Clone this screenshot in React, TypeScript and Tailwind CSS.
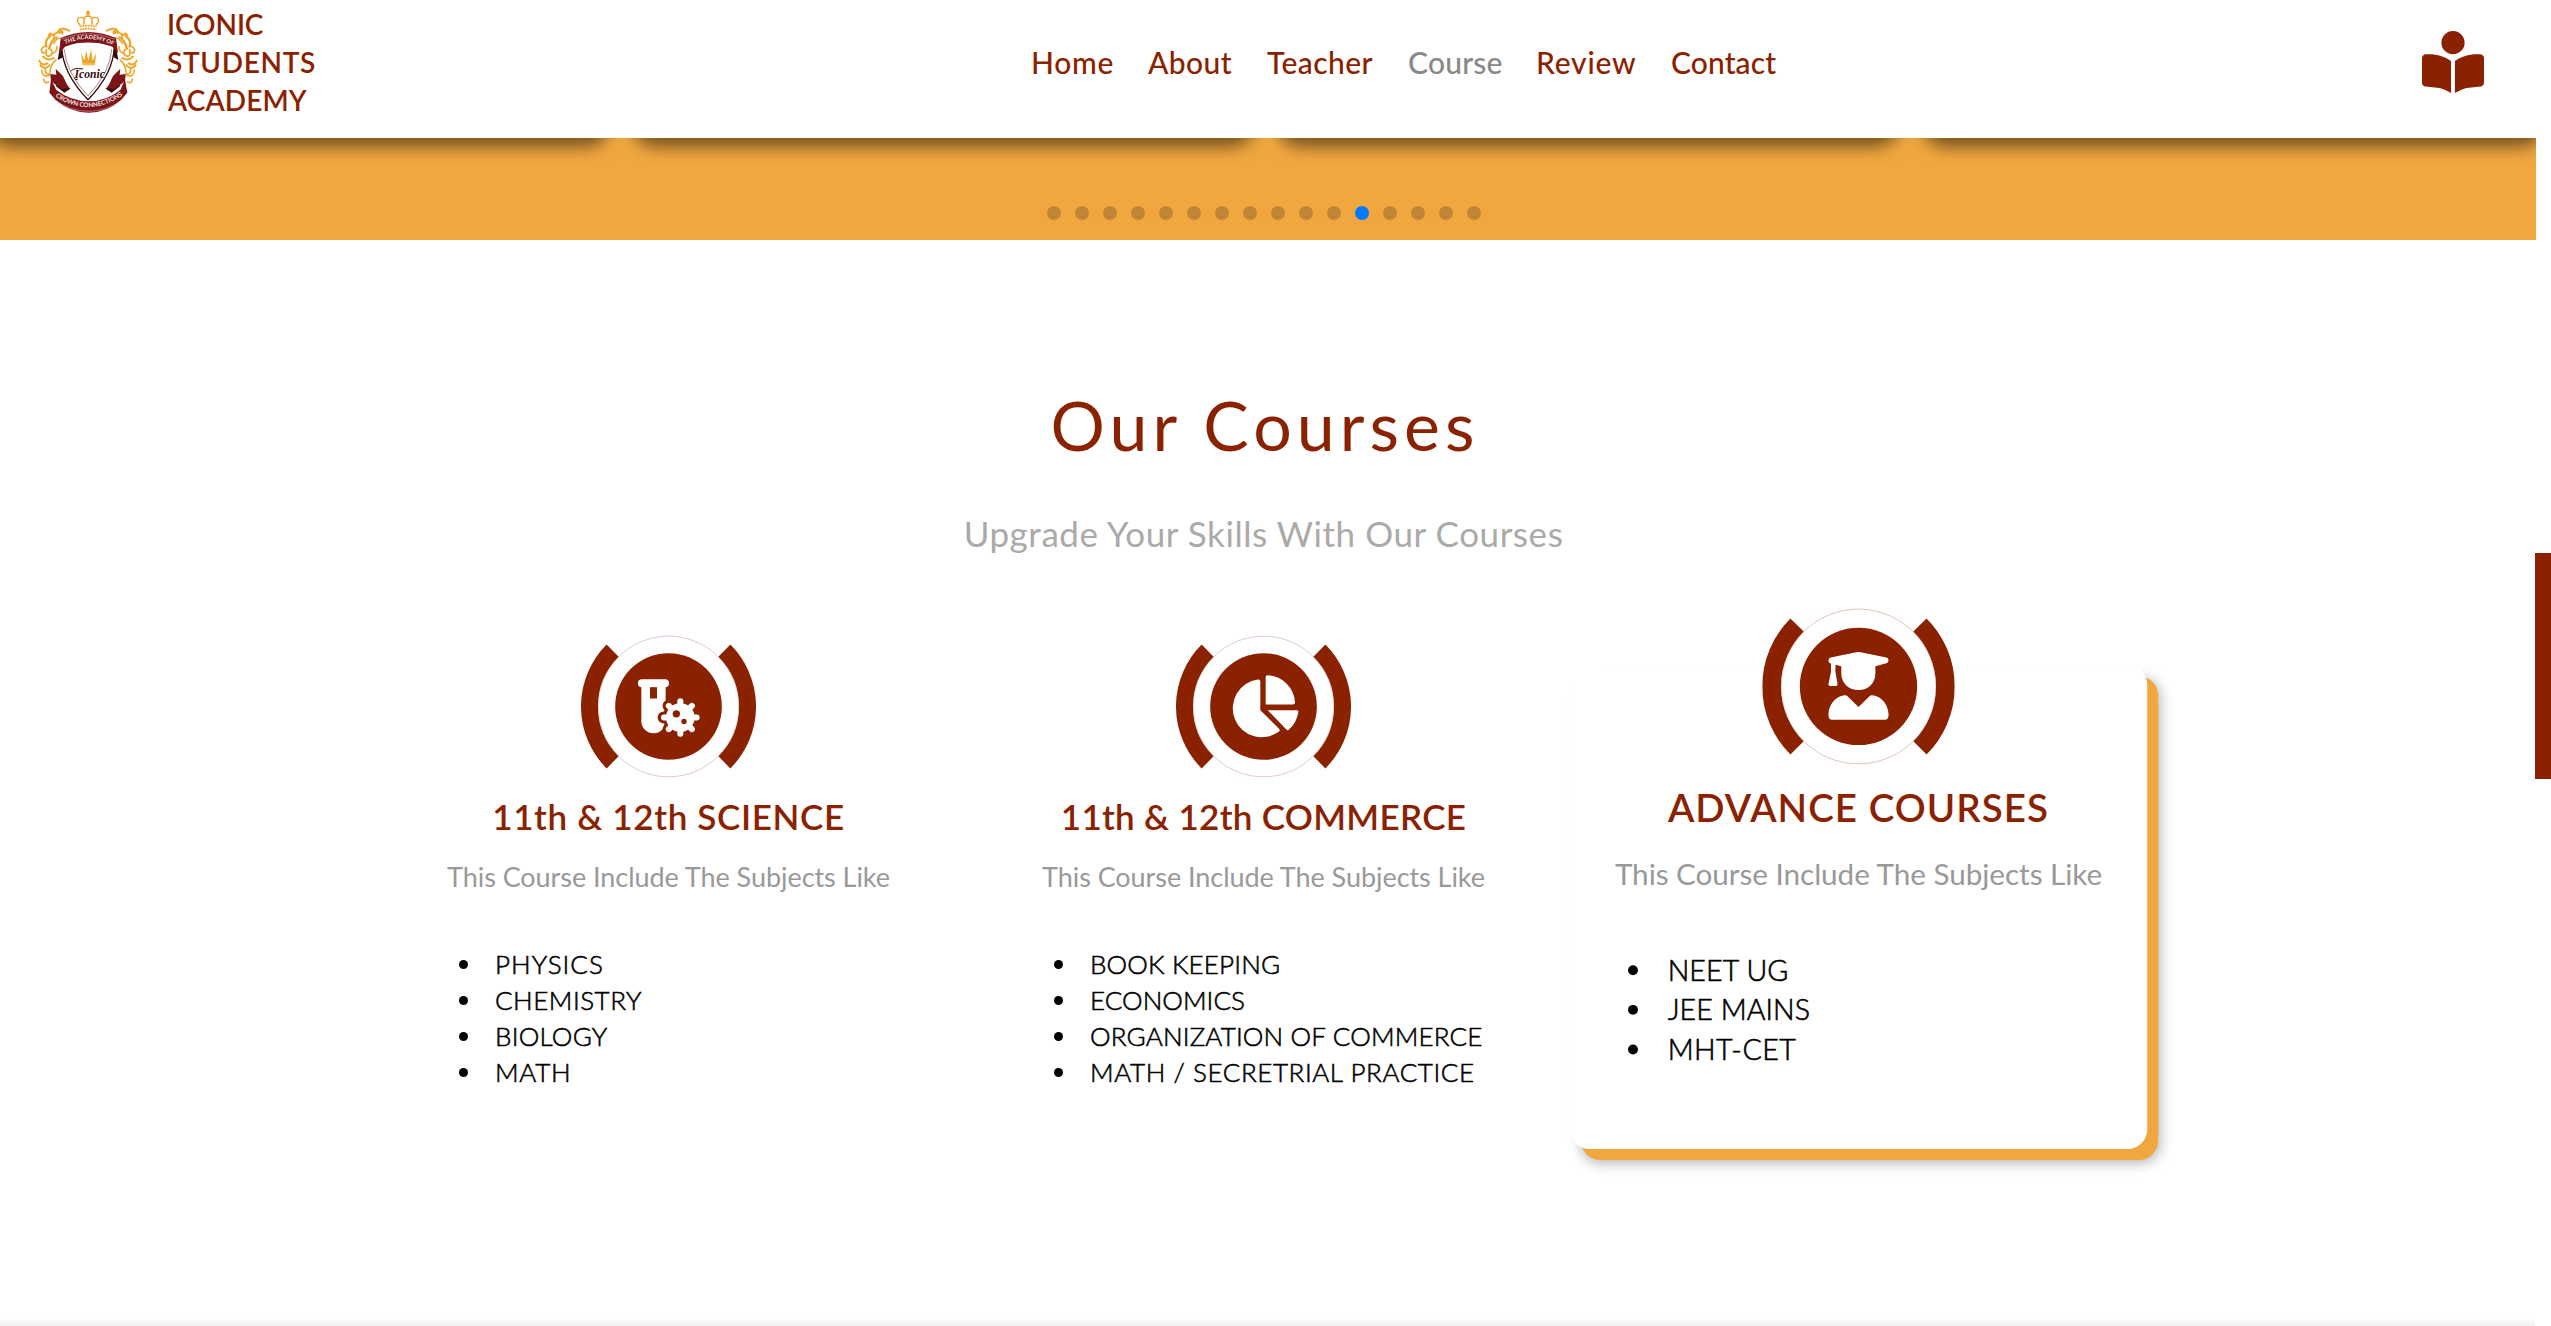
import type { ReactNode } from 'react'
import { FaBookOpenReader } from 'react-icons/fa6'

const BROWN = '#8a2200'
const GOLD = '#f0a426'
const MAROON = '#7d1518'
const DARK = '#3a0a0c'

function LogoSide() {
  return (
    <g fill="none" stroke={GOLD} strokeLinecap="round">
      <path d="M206 92c-14-8-28-8-32 2 8-4 14 0 12 6-12-6-24-2-26 8-3-8-12-10-14-2" strokeWidth="6" />
      <path d="M150 108c-12 8-16 20-12 32M168 112c-12 6-18 20-22 34" strokeWidth="7" />
      <path d="M134 138c-10 4-14 14-8 20 8 2 14-4 12-10M148 146c10 6 10 18 0 22-8 2-14-4-10-10" strokeWidth="5" />
      <path d="M117 182c4 12 14 14 24 8M120 196c8 10 18 10 28 0M128 170c8 8 18 12 32 4" strokeWidth="6" />
      <path d="M124 210c0 14 8 22 22 16M136 206c-4 12 4 20 14 14M130 238c2 10 8 12 14 8" strokeWidth="5" />
      <path d="M166 180c-8 8-18 20-16 34M160 130c6-10 12-16 18-16M158 160c8-4 12-12 12-20" strokeWidth="5" />
    </g>
  )
}

function Logo() {
  return (
    <svg viewBox="113 30 300 309" className="h-[103px] w-[100px] shrink-0" aria-label="Iconic Students Academy">
      <defs>
        <path id="topArc" d="M190 135Q263 98 340 137" />
        <path id="bottomArc" d="M163 288Q263 357 370 284" />
      </defs>
      <LogoSide />
      <g transform="translate(526 0) scale(-1 1)">
        <LogoSide />
      </g>
      <g fill="none" stroke={GOLD} strokeWidth="4">
        <circle cx="263" cy="40" r="4" fill={GOLD} />
        <path d="M263 31v16M257 36h12" strokeWidth="3" />
        <path d="M240 76c-14-12-10-24 2-24 8 0 12 8 8 22M286 76c14-12 10-24-2-24-8 0-12 8-8 22M252 74c-4-14 0-26 11-26s15 12 11 26" />
        <path d="M238 80q25-6 50 0M238 89q25-6 50 0" strokeWidth="5" strokeDasharray="6 2" />
      </g>
      <path d="M182 122L172 180l16-8 10-30zM344 122l10 58-14-8-10-30z" fill={DARK} />
      <path d="M184 138Q186 220 263 299Q340 220 342 138Q263 112 184 138Z" fill="#fff" stroke={DARK} strokeWidth="4" />
      <path d="M192 148Q196 216 263 288Q330 216 334 148" fill="none" stroke={DARK} strokeWidth="1.5" />
      <path d="M181 114Q263 78 347 114L353 160L336 140Q263 114 194 140L176 162Z" fill={MAROON} />
      <path d="M184 118Q263 84 344 118" fill="none" stroke="#e9c9c9" strokeWidth="1.5" />
      {/* Ribbon tails, then the folded band below the shield */}
      <path d="M182 236l28 30-18 12-26-20zM344 236l-28 30 18 12 26-20z" fill={DARK} />
      <path d="M150 222l18 2-2-18 22 22 10 22 8 14-22 4-32-24zM376 222l-18 2 2-18-22 22-10 22-8 14 22 4 32-24z" fill={MAROON} />
      <path d="M152 238L147 278L166 300Q210 338 265 338Q320 338 362 300L381 278L374 238L360 270Q318 304 265 304Q212 304 168 270Z" fill={MAROON} />
      <path d="M160 298Q210 334 265 334Q320 334 368 298" fill="none" stroke="#e9c9c9" strokeWidth="1.5" />
      <path d="M247 196l-5-38 11 24 4-32 7 32 8-34 5 34 11-24-5 38z" fill={GOLD} />
      <path d="M246 192h36" stroke="#fff" strokeWidth="1.5" />
      <text fontFamily="Lato, sans-serif" fontSize="17" fontWeight="700" fill="#f6e4e4">
        <textPath href="#topArc" startOffset="6">THE ACADEMY OF</textPath>
      </text>
      <text fontFamily="Lato, sans-serif" fontSize="19" fontWeight="700" fill="#f6e4e4">
        <textPath href="#bottomArc" startOffset="2">CROWN CONNECTIONS</textPath>
      </text>
      <text x="268" y="235" textAnchor="middle" fontFamily="'Liberation Serif', serif" fontSize="35" fontStyle="italic" fontWeight="700" fill={DARK}>
        Iconic
      </text>
      <path d="M212 214q6-12 36-7M232 238q-8 4-10-4" fill="none" stroke={DARK} strokeWidth="3" />
    </svg>
  )
}

function Badge({ children }: { children: ReactNode }) {
  return (
    <svg viewBox="-262.5 -262.5 525 525" className="-mt-[68px] size-[175px] shrink-0">
      <path d="M167.6 -167.6A237 237 0 0 1 167.6 167.6M-167.6 -167.6A237 237 0 0 0 -167.6 167.6" fill="none" stroke={BROWN} strokeWidth="51" />
      <circle r="211" fill="#fff" stroke={BROWN} strokeOpacity="0.4" strokeWidth="1.8" />
      <circle r="160" fill={BROWN} />
      {children}
    </svg>
  )
}

const teeth = [0, 45, 90, 135, 180, 225, 270, 315]

function ScienceGlyph() {
  return (
    <g transform="translate(-385.5 -289)" fill="#fff">
      <rect x="294" y="207" width="93" height="24" rx="11" />
      <path d="M304 225H377V333A36.5 36.5 0 0 1 304 333Z" />
      <rect x="330" y="231" width="21" height="34" fill={BROWN} />
      <g transform="translate(421 322)" strokeLinecap="round">
        <g fill={BROWN} stroke={BROWN} strokeWidth="36">
          <circle r="52" stroke="none" />
          {teeth.map((a) => (
            <path key={a} d="M0 -30V-50" transform={`rotate(${a})`} />
          ))}
        </g>
        <g stroke="#fff" strokeWidth="18">
          <circle r="43" stroke="none" />
          {teeth.map((a) => (
            <path key={a} d="M0 -30V-49" transform={`rotate(${a})`} />
          ))}
        </g>
        <circle cx="-12" cy="-11" r="11" fill={BROWN} />
        <circle cx="11" cy="12" r="8" fill={BROWN} />
      </g>
    </g>
  )
}

function CommerceGlyph() {
  return (
    <g transform="translate(-370.5 -289)" fill="#fff">
      <path d="M361 214q0-7-7-6A87 87 0 1 0 416 365q6-4 1-9L361 300Z" />
      <path d="M377 201q0-6 6-6A87 87 0 0 1 465 276q0 7-6 7H377Z" />
      <path d="M383 300H470q6 0 5 6A90 90 0 0 1 447 358q-4 4-8 0Z" />
    </g>
  )
}

function GraduateGlyph() {
  return (
    <g fill="#fff">
      <path d="M-6 -93Q0 -95 6 -93L76 -79Q82 -77 82 -71Q82 -65 76 -63L46 -55V-36C46 -8 26 10 0 10C-26 10 -47 -8 -47 -36V-55L-63 -59V-40L-57 -6Q-57 -1 -62 -1H-77Q-82 -1 -82 -6L-75 -40V-62Q-82 -65 -82 -71Q-82 -77 -76 -79Z" />
      <path d="M-38 24Q-33 23 -30 27L0 56L30 27Q33 23 38 24C65 27 82 52 82 78Q82 91 72 91H-72Q-82 91 -82 78C-82 52 -65 27 -38 24Z" />
    </g>
  )
}

const nav = [
  { label: 'Home', style: 'w-[117px] tracking-[0.7px]' },
  { label: 'About', style: 'w-[119px] tracking-[0.4px]' },
  { label: 'Teacher', style: 'w-[141px] tracking-[0.4px]' },
  { label: 'Course', style: 'w-[128px] tracking-[0.2px] text-[#888888]' },
  { label: 'Review', style: 'w-[135px] tracking-[0.8px]' },
  { label: 'Contact', style: 'w-[110px] tracking-[0.1px]' },
]

const courses = [
  {
    title: '11th & 12th SCIENCE',
    titleStyle: 'tracking-[0.65px]',
    cardStyle: '',
    glyph: <ScienceGlyph />,
    subjects: [
      { name: 'PHYSICS', style: 'tracking-[1px]' },
      { name: 'CHEMISTRY', style: 'tracking-[0.5px]' },
      { name: 'BIOLOGY', style: 'tracking-[0.25px]' },
      { name: 'MATH', style: 'tracking-[0.7px]' },
    ],
  },
  {
    title: '11th & 12th COMMERCE',
    titleStyle: 'tracking-[0.3px]',
    cardStyle: '',
    glyph: <CommerceGlyph />,
    subjects: [
      { name: 'BOOK KEEPING', style: 'tracking-[0.15px]' },
      { name: 'ECONOMICS', style: 'tracking-[0.05px]' },
      { name: 'ORGANIZATION OF COMMERCE', style: 'tracking-[0.15px]' },
      { name: 'MATH / SECRETRIAL PRACTICE', style: 'tracking-[0.58px]' },
    ],
  },
  {
    title: 'ADVANCE COURSES',
    titleStyle: 'tracking-[0.95px]',
    cardStyle: 'scale-110 rounded-[18px] shadow-[10px_10px_0_0_#f0a73f,11px_12px_12px_0_rgba(0,0,0,0.3)]',
    glyph: <GraduateGlyph />,
    subjects: [
      { name: 'NEET UG', style: 'tracking-[0.1px]' },
      { name: 'JEE MAINS', style: 'tracking-[0.05px]' },
      { name: 'MHT-CET', style: 'tracking-[0.4px]' },
    ],
  },
]

const bullets = Array.from({ length: 16 }, (_, i) => i)

export default function App() {
  return (
    <div className="flex h-[1326px] w-[2551px] overflow-hidden bg-white font-['Lato',sans-serif]">
      <main className="flex w-[2535px] flex-col">
        <header className="flex h-[138px] shrink-0 items-center bg-white pb-[15px] pl-[38px] text-[#8a2200]">
          <Logo />
          <div className="ml-[29px] w-[865px] text-[28px] leading-[38px] font-semibold">
            <p className="tracking-[-0.1px]">ICONIC</p>
            <p className="tracking-[0.7px]">STUDENTS</p>
            <p className="pl-px tracking-[0.1px]">ACADEMY</p>
          </div>
          <nav className="-ml-px flex text-[30px] leading-[38px] font-medium whitespace-nowrap">
            {nav.map((n) => (
              <a key={n.label} className={n.style}>
                {n.label}
              </a>
            ))}
          </nav>
          <FaBookOpenReader className="mr-[51px] ml-auto size-[62px]" />
        </header>

        <section className="flex h-[102px] w-[2536px] shrink-0 flex-col overflow-hidden bg-[#f0a73f]">
          <div className="-mt-[68px] -ml-[13px] flex w-[2570px] shrink-0 gap-[22px]">
            {[0, 1, 2, 3].map((i) => (
              <div key={i} className="h-[60px] w-[623px] shrink-0 rounded-[24px] bg-white shadow-[0_17px_16px_0_rgba(0,0,0,0.5)]" />
            ))}
          </div>
          <div className="mt-[76px] flex justify-center gap-3.5 pr-2">
            {bullets.map((i) => (
              <span key={i} className={i === 11 ? 'size-3.5 rounded-full bg-[#007aff]' : 'size-3.5 rounded-full bg-black/20'} />
            ))}
          </div>
        </section>

        <section className="ml-[406px] flex w-[1715px] flex-1 flex-col pt-[145px]">
          <h1 className="pl-[3px] text-center text-[68px] leading-[80px] tracking-[5.1px] text-[#8a2200]">Our Courses</h1>
          <p className="mt-[46px] text-center text-[35px] leading-[44px] tracking-[0.56px] text-[#aaaaaa]">
            Upgrade Your Skills With Our Courses
          </p>
          <div className="mt-[132px] flex gap-[70px]">
            {courses.map((c) => (
              <article key={c.title} className={`flex h-[440px] w-[525px] flex-col items-center bg-white ${c.cardStyle}`}>
                <Badge>{c.glyph}</Badge>
                <h2 className={`text-[35px] leading-[44px] font-semibold text-[#8a2200] ${c.titleStyle}`}>{c.title}</h2>
                <p className="mt-[21px] text-[27px] leading-9 tracking-[-0.05px] text-[#999999]">This Course Include The Subjects Like</p>
                <ul className="mt-[51px] w-full pl-[53px] text-[26px] leading-9 font-light text-black [-webkit-text-stroke:0.55px_black]">
                  {c.subjects.map((s) => (
                    <li key={s.name} className="flex items-center gap-[27px]">
                      <span className="size-[9px] rounded-full bg-black" />
                      <span className={s.style}>{s.name}</span>
                    </li>
                  ))}
                </ul>
              </article>
            ))}
          </div>
        </section>
        <div className="h-2 shrink-0 bg-linear-to-b from-white to-[#f0f0f0]" />
      </main>
      <aside className="w-4 pt-[553px]">
        <div className="h-[226px] bg-[#8a2200]" />
      </aside>
    </div>
  )
}
